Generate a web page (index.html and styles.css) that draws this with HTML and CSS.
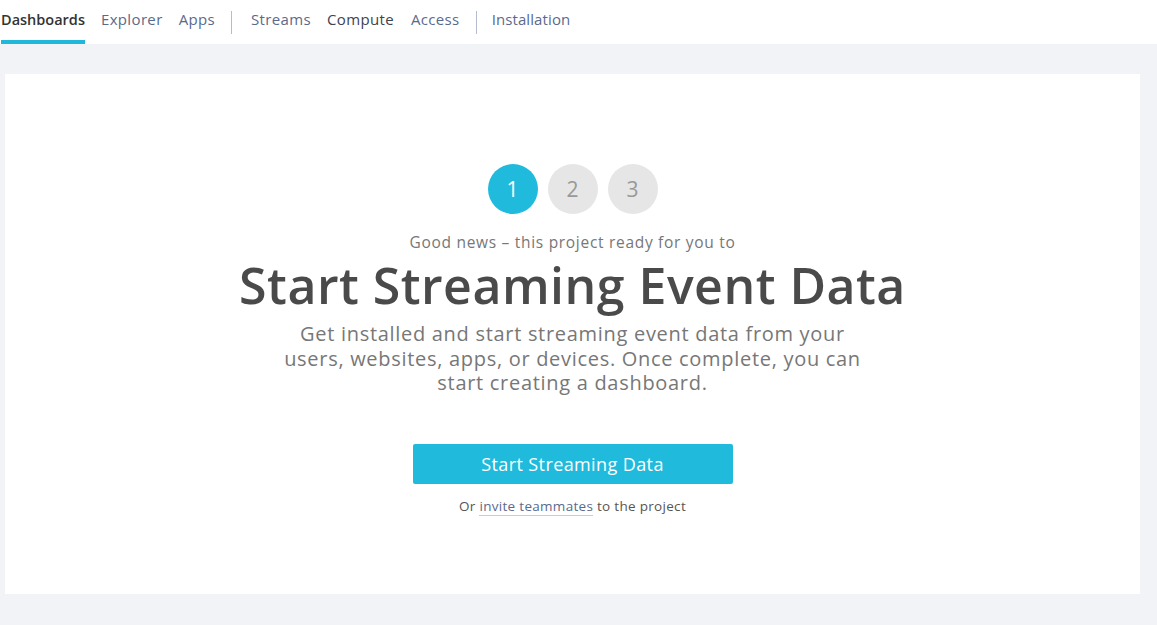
FILE: index.html
```html
<!DOCTYPE html>
<html>
<head>
<meta charset="utf-8">
<link rel="stylesheet" href="styles.css">
</head>
<body>
<header class="topnav">
  <a class="tab active">Dashboards</a>
  <a class="tab">Explorer</a>
  <a class="tab">Apps</a>
  <span class="sep"></span>
  <a class="tab">Streams</a>
  <a class="tab dark">Compute</a>
  <a class="tab">Access</a>
  <span class="sep sep-last"></span>
  <a class="tab tight">Installation</a>
</header>
<main class="page">
  <section class="card">
    <div class="steps">
      <span class="step on">1</span>
      <span class="step">2</span>
      <span class="step">3</span>
    </div>
    <p class="kicker">Good news – this project ready for you to</p>
    <h1 class="title">Start Streaming Event Data</h1>
    <p class="lead">Get installed and start streaming event data from your users, websites, apps, or devices. Once complete, you can start creating a dashboard.</p>
    <button class="cta">Start Streaming Data</button>
    <p class="invite">Or <a class="link">invite teammates</a> to the project</p>
  </section>
</main>
</body>
</html>
```
FILE: styles.css
```css
html, body { margin: 0; padding: 0; }
body {
  font-family: "Open Sans", "Lato", sans-serif;
  background: #f2f3f6;
  width: 1157px;
  height: 625px;
  overflow: hidden;
}
.topnav {
  display: flex;
  align-items: center;
  height: 44px;
  background: #fff;
  padding-left: 1px;
  box-sizing: border-box;
}
.tab {
  font-size: 15px;
  letter-spacing: 0.35px;
  color: #5b6a8c;
  margin-right: 16px;
  height: 44px;
  line-height: 39px;
  box-sizing: border-box;
}
.tab.active {
  color: #333;
  font-weight: 600;
  font-size: 14.5px;
  letter-spacing: 0;
  border-bottom: 4px solid #1fb8db;
}
.tab.dark { color: #3d4350; margin-right: 17px; }
.tab.tight { letter-spacing: 0.1px; }
.sep {
  width: 1px;
  height: 23px;
  background: #b5bccb;
  margin: 0 19px 0 0;
}
.sep.sep-last { margin-right: 15px; }
.page {
  padding: 30px 17px 0 5px;
}
.card {
  background: #fff;
  height: 520px;
  display: flex;
  flex-direction: column;
  align-items: center;
  padding-top: 90px;
  box-sizing: border-box;
}
.steps { display: flex; gap: 10px; }
.step {
  width: 50px; height: 50px;
  border-radius: 50%;
  background: #e6e6e6;
  color: #999;
  font-size: 21px;
  display: flex; align-items: center; justify-content: center;
}
.step.on { background: #1fbadc; color: #fff; }
.kicker {
  margin: 18px 0 0;
  font-size: 15.5px;
  letter-spacing: 0.7px;
  color: #777;
  line-height: 20px;
}
.title {
  margin: 4px 0 0;
  font-size: 50px;
  font-weight: 600;
  letter-spacing: 0.5px;
  color: #4a4a4a;
  line-height: 58px;
}
.lead {
  margin: 8px 0 0;
  width: 590px;
  text-align: center;
  font-size: 20px;
  letter-spacing: 0.7px;
  line-height: 24.5px;
  color: #777;
}
.cta {
  margin-top: 48px;
  width: 320px; height: 40px;
  border: 0; border-radius: 2px;
  background: #1fbadc;
  color: #fff;
  font-family: inherit;
  font-size: 18px;
  letter-spacing: 0.4px;
}
.invite {
  margin: 13px 0 0;
  font-size: 13.5px;
  letter-spacing: 0.3px;
  color: #555;
}
.link {
  color: #5b6a8c;
  border-bottom: 1px solid #9fdcee;
}
```
